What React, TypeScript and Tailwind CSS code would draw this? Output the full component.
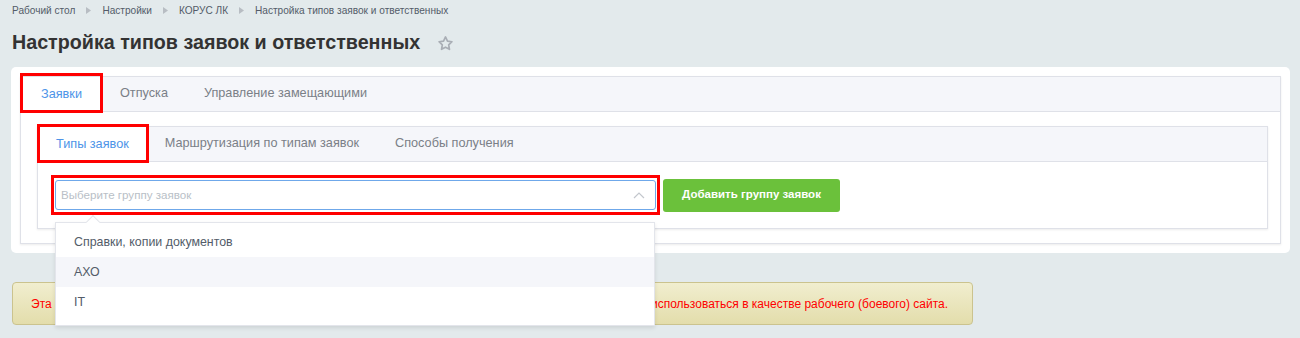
import React from "react";

const crumbs = ["Рабочий стол", "Настройки", "КОРУС ЛК", "Настройка типов заявок и ответственных"];
const outerTabs = ["Заявки", "Отпуска", "Управление замещающими"];
const innerTabs = ["Типы заявок", "Маршрутизация по типам заявок", "Способы получения"];
const groups = ["Справки, копии документов", "АХО", "IT"];

const Arrow = () => (
  <svg width="5" height="7" viewBox="0 0 5 7" className="mx-[11px]">
    <path d="M0 0 L5 3.5 L0 7 Z" fill="#b8bdc3" />
  </svg>
);

const Star = () => (
  <svg width="17" height="17" viewBox="0 0 24 24" className="ml-[17px] mt-[2px]">
    <path
      d="M12 2.8l2.8 5.8 6.3.9-4.6 4.4 1.1 6.3L12 17.2l-5.6 3 1.1-6.3-4.6-4.4 6.3-.9z"
      fill="none"
      stroke="#a9aeb5"
      strokeWidth="2.4"
      strokeLinejoin="round"
    />
  </svg>
);

export default function App() {
  return (
    <div className="min-h-screen bg-[#e3eaec] pt-[4px] font-['Liberation_Sans',Arial,sans-serif]">
      {/* breadcrumbs */}
      <div className="flex items-center px-3 text-[10.1px] leading-[13px] text-[#535c69]">
        {crumbs.map((c, i) => (
          <React.Fragment key={c}>
            <span>{c}</span>
            {i < crumbs.length - 1 && <Arrow />}
          </React.Fragment>
        ))}
      </div>

      {/* title */}
      <div className="mt-[13px] flex items-center px-3">
        <h1 className="text-[19.7px] leading-[24px] font-bold text-[#333]">
          Настройка типов заявок и ответственных
        </h1>
        <Star />
      </div>

      {/* main panel */}
      <div className="mt-[13px] ml-[11px] mr-[10px] rounded-[5px] bg-white p-[9px]">
        <div className="border border-[#dfe1e8] shadow-[0_1px_2px_rgba(0,0,0,0.08)]">
          <div className="flex h-[35px] border-b border-[#dfe1e8] bg-[#f5f6fa] text-[12.7px] text-[#7a7f87]">
            {outerTabs.map((t, i) =>
              i === 0 ? (
                <div key={t} className="relative -mb-px flex items-center bg-white px-[20px] text-[#4d94e8]">
                  {t}
                  <div className="absolute -top-[4px] -bottom-px -left-px -right-px border-[3px] border-[#f00]" />
                </div>
              ) : (
                <div key={t} className="flex items-center px-[18px]">
                  {t}
                </div>
              )
            )}
          </div>

          <div className="pt-[14px] pb-[14px] pl-[16px] pr-[12px]">
            <div className="border border-[#dfe1e8] shadow-[0_1px_2px_rgba(0,0,0,0.08)]">
              <div className="flex h-[35px] border-b border-[#dfe1e8] bg-[#f5f6fa] text-[12.7px] text-[#7a7f87]">
                {innerTabs.map((t, i) =>
                  i === 0 ? (
                    <div key={t} className="relative -mb-px flex items-center bg-white px-[18px] text-[#4d94e8]">
                      {t}
                      <div className="absolute -top-[3px] -bottom-px -left-px -right-[2px] border-[3px] border-[#f00]" />
                    </div>
                  ) : (
                    <div key={t} className="flex items-center px-[18px]">
                      {t}
                    </div>
                  )
                )}
              </div>

              <div className="flex items-center p-[13px]">
                <div className="border-[3px] border-[#f00] px-px py-[2px]">
                  <div className="relative">
                    <div className="flex h-[30px] w-[601px] items-center justify-between rounded-[3px] border border-[#6fa8ea] pl-[5px] pr-[10px] text-[11.6px] text-[#b9bfc7]">
                      <span>Выберите группу заявок</span>
                      <svg width="12" height="7" viewBox="0 0 12 7">
                        <path d="M1 6 L6 1 L11 6" fill="none" stroke="#c3c7cd" strokeWidth="1.2" />
                      </svg>
                    </div>

                    {/* dropdown */}
                    <div className="absolute left-0 top-[42px] z-10 w-[600px] border border-[#e3e5eb] bg-white pt-[4px] pb-[8px] text-[12.4px] text-[#535c69] shadow-[0_2px_4px_rgba(0,0,0,0.1)]">
                      <div className="absolute -top-[6px] left-[32px] h-[10px] w-[10px] rotate-45 border-l border-t border-[#e3e5eb] bg-white" />
                      {groups.map((g, i) => (
                        <div
                          key={g}
                          className={`relative flex h-[30px] items-center pl-[18px] ${i === 1 ? "bg-[#f5f6fa]" : ""}`}
                        >
                          {g}
                        </div>
                      ))}
                    </div>
                  </div>
                </div>
                <button className="ml-[3px] h-[33px] w-[177px] rounded-[3px] bg-[#6bc13b] text-[11.5px] font-bold text-white">
                  Добавить группу заявок
                </button>
              </div>
            </div>
          </div>
        </div>
      </div>

      {/* license warning */}
      <div className="mt-[29px] ml-[12px] flex h-[43px] w-[961px] items-center whitespace-nowrap rounded-[4px] border border-[#cbc38e] bg-gradient-to-b from-[#f1eecf] to-[#e3ddab] pl-[18px] text-[12px] text-[#f00]">
        Эта копия продукта предназначена только для разработки и тестирования. Лицензия не позволяет этой копии использоваться в качестве рабочего (боевого) сайта.
      </div>
    </div>
  );
}
